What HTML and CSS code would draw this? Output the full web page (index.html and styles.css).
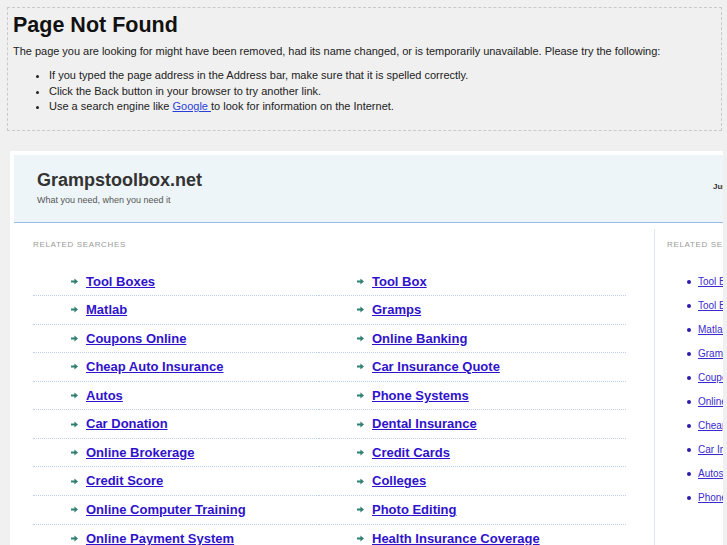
FILE: index.html
```html
<!DOCTYPE html>
<html>
<head>
<meta charset="utf-8">
<title>Page Not Found</title>
<link rel="stylesheet" href="styles.css">
</head>
<body>
<div class="notice">
  <h1>Page Not Found</h1>
  <p>The page you are looking for might have been removed, had its name changed, or is temporarily unavailable. Please try the following:</p>
  <ul>
    <li>If you typed the page address in the Address bar, make sure that it is spelled correctly.</li>
    <li>Click the Back button in your browser to try another link.</li>
    <li>Use a search engine like <a href="#">Google </a> to look for information on the Internet.</li>
  </ul>
</div>
<div class="frame">
  <div class="site">
    <div class="header">
      <div class="brand">
        <div class="title">Grampstoolbox.net</div>
        <div class="tagline">What you need, when you need it</div>
      </div>
      <div class="hright">Just type and search</div>
    </div>
    <div class="content">
      <div class="main">
        <div class="label">RELATED SEARCHES</div>
        <ul class="links">
          <li><a href="#">Tool Boxes</a></li>
          <li><a href="#">Tool Box</a></li>
          <li><a href="#">Matlab</a></li>
          <li><a href="#">Gramps</a></li>
          <li><a href="#">Coupons Online</a></li>
          <li><a href="#">Online Banking</a></li>
          <li><a href="#">Cheap Auto Insurance</a></li>
          <li><a href="#">Car Insurance Quote</a></li>
          <li><a href="#">Autos</a></li>
          <li><a href="#">Phone Systems</a></li>
          <li><a href="#">Car Donation</a></li>
          <li><a href="#">Dental Insurance</a></li>
          <li><a href="#">Online Brokerage</a></li>
          <li><a href="#">Credit Cards</a></li>
          <li><a href="#">Credit Score</a></li>
          <li><a href="#">Colleges</a></li>
          <li><a href="#">Online Computer Training</a></li>
          <li><a href="#">Photo Editing</a></li>
          <li><a href="#">Online Payment System</a></li>
          <li><a href="#">Health Insurance Coverage</a></li>
        </ul>
      </div>
      <div class="side">
        <div class="label">RELATED SEARCHES</div>
        <ul class="slinks">
          <li><a href="#">Tool Boxes</a></li>
          <li><a href="#">Tool Box</a></li>
          <li><a href="#">Matlab</a></li>
          <li><a href="#">Gramps</a></li>
          <li><a href="#">Coupons Online</a></li>
          <li><a href="#">Online Banking</a></li>
          <li><a href="#">Cheap Auto Insurance</a></li>
          <li><a href="#">Car Insurance Quote</a></li>
          <li><a href="#">Autos</a></li>
          <li><a href="#">Phone Systems</a></li>
        </ul>
      </div>
    </div>
  </div>
</div>
</body>
</html>
```

FILE: styles.css
```css
html, body {
  margin: 0;
  padding: 0;
  background: #f0f0f0;
  height: 100%;
  overflow: hidden;
}
body {
  font-family: "Liberation Sans", Arial, sans-serif;
  color: #222;
}
.notice {
  margin: 7px 5px 0 7px;
  border: 1px dashed #c9c9c9;
  padding: 0 5px;
  font-size: 11px;
}
.notice h1 {
  margin: 3px 0 0;
  font-size: 21.5px;
  line-height: 28px;
  font-weight: bold;
  color: #111;
}
.notice p {
  margin: 5px 0 0;
  line-height: 14px;
  letter-spacing: -0.02px;
}
.notice ul {
  margin: 10px 0 15px;
  padding-left: 36px;
  line-height: 15.5px;
}
.notice a {
  color: #2a3fd8;
  text-decoration: underline;
}
.frame {
  margin: 20px 4px 0 10px;
  background: #fff;
  padding: 4px;
  overflow: hidden;
  height: 600px;
}
.site {
  width: 960px;
}
.header {
  display: flex;
  background: #eef5f8;
  border-bottom: 1px solid #97bbe6;
  height: 67px;
}
.brand {
  width: 699px;
  padding: 14px 0 0 23px;
  box-sizing: border-box;
}
.title {
  font-size: 18px;
  font-weight: bold;
  color: #333;
  line-height: 22px;
}
.tagline {
  font-size: 9px;
  color: #555;
  margin-top: 4px;
}
.hright {
  padding-top: 27px;
  font-size: 8px;
  font-weight: bold;
  color: #333;
}
.content {
  display: flex;
}
.main {
  width: 640px;
  padding: 17px 0 0 19px;
  box-sizing: border-box;
}
.label {
  font-size: 8px;
  line-height: 10px;
  color: #9a9a9a;
  letter-spacing: 0.65px;
}
.links {
  list-style: none;
  margin: 18px 0 0;
  padding: 0;
  display: grid;
  grid-template-columns: 286px 307px;
}
.links li {
  line-height: 27.56px;
  border-bottom: 1px dotted #bcd0ee;
  padding-left: 38px;
  display: flex;
  align-items: center;
  gap: 8px;
}
.links li::before {
  content: "";
  width: 7px;
  height: 7px;
  flex: none;
  background: url("data:image/svg+xml,%3Csvg xmlns='http://www.w3.org/2000/svg' viewBox='0 0 7 7'%3E%3Cpath d='M0 2.6h3.4V0.6L7 3.5 3.4 6.4V4.4H0z' fill='%232f7f72'/%3E%3C/svg%3E") no-repeat center / contain;
}
.links a {
  font-size: 13px;
  font-weight: bold;
  color: #2f12cc;
  text-decoration: underline;
}
.side {
  margin-top: 6px;
  border-left: 1px solid #dbe6f4;
  padding: 11px 0 0 12px;
  width: 300px;
}
.slinks {
  margin: 20px 0 0;
  padding-left: 31px;
  list-style: none;
}
.slinks li {
  line-height: 24.1px;
  font-size: 10px;
  display: flex;
  align-items: center;
  gap: 7px;
}
.slinks li::before {
  content: "";
  width: 4px;
  height: 4px;
  border-radius: 50%;
  background: #2a1cb0;
  margin-left: -11px;
  flex: none;
}
.slinks a {
  color: #3a2bd0;
  text-decoration: underline;
}
```
